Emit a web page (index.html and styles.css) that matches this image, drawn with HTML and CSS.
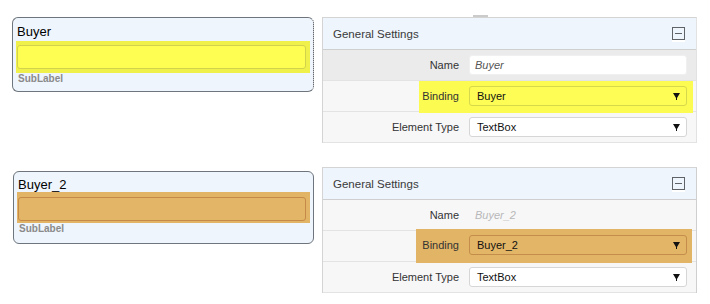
FILE: index.html
```html
<!DOCTYPE html>
<html lang="en">
<head>
  <meta charset="UTF-8" />
  <meta name="viewport" content="width=device-width, initial-scale=1.0" />
  <title>Binding highlight</title>
  <link rel="stylesheet" href="styles.css">
</head>
<body>
  <div class="board">
    <div class="pair">
      <div class="card card--selected">
        <div class="card-label">Buyer</div>
        <div class="mark mark--yellow"><div class="card-input"></div></div>
        <div class="sublabel">SubLabel</div>
      </div>

      <div class="panel">
        <span class="handle"></span>
        <div class="panel-head">
          <span>General Settings</span>
          <svg class="collapse" width="13" height="13" viewBox="0 0 13 13">
            <rect x="0.5" y="0.5" width="12" height="12" fill="none" stroke="#5f6368" />
            <line x1="3" y1="6.5" x2="10" y2="6.5" stroke="#5f6368" />
          </svg>
        </div>
        <div class="prop prop--focus">
          <label class="prop-label">Name</label>
          <div class="prop-value"><div class="field text-input">Buyer</div></div>
        </div>
        <div class="prop">
          <label class="prop-label hl hl--yellow">Binding</label>
          <div class="prop-value hl hl--yellow">
            <div class="field select">Buyer
              <svg width="7" height="7" viewBox="0 0 7 7"><path d="M0 0H7L4 5V7H3V5Z" fill="#111" /></svg>
            </div>
          </div>
        </div>
        <div class="prop">
          <label class="prop-label">Element Type</label>
          <div class="prop-value">
            <div class="field select">TextBox
              <svg width="7" height="7" viewBox="0 0 7 7"><path d="M0 0H7L4 5V7H3V5Z" fill="#111" /></svg>
            </div>
          </div>
        </div>
      </div>
    </div>

    <div class="pair">
      <div class="card card--alt">
        <div class="card-label">Buyer_2</div>
        <div class="mark mark--orange"><div class="card-input"></div></div>
        <div class="sublabel">SubLabel</div>
      </div>

      <div class="panel panel--alt">
        <div class="panel-head">
          <span>General Settings</span>
          <svg class="collapse" width="13" height="13" viewBox="0 0 13 13">
            <rect x="0.5" y="0.5" width="12" height="12" fill="none" stroke="#5f6368" />
            <line x1="3" y1="6.5" x2="10" y2="6.5" stroke="#5f6368" />
          </svg>
        </div>
        <div class="prop">
          <label class="prop-label">Name</label>
          <div class="prop-value"><div class="field text-input text-input--bare">Buyer_2</div></div>
        </div>
        <div class="prop">
          <label class="prop-label hl hl--orange">Binding</label>
          <div class="prop-value hl hl--orange">
            <div class="field select">Buyer_2
              <svg width="7" height="7" viewBox="0 0 7 7"><path d="M0 0H7L4 5V7H3V5Z" fill="#111" /></svg>
            </div>
          </div>
        </div>
        <div class="prop">
          <label class="prop-label">Element Type</label>
          <div class="prop-value">
            <div class="field select">TextBox
              <svg width="7" height="7" viewBox="0 0 7 7"><path d="M0 0H7L4 5V7H3V5Z" fill="#111" /></svg>
            </div>
          </div>
        </div>
      </div>
    </div>
  </div>
</body>
</html>
```

FILE: styles.css
```css
body {
  margin: 0;
  font-family: "Liberation Sans", Arial, sans-serif;
  background: #fff;
}
.board {
  padding: 17px 0 0 12px;
}
.pair {
  display: flex;
  align-items: flex-start;
  gap: 8px;
}
.pair + .pair {
  margin-top: 24px;
}

/* designer cards */
.card {
  width: 302px;
  height: 75px;
  box-sizing: border-box;
  border: 1px solid #6e757c;
  border-radius: 6px;
  background: #eff5fc;
  padding: 6px 3px 0 3px;
}
.card--selected {
  border-right: 1px dotted #3a3a3a;
}
.card--alt {
  width: 301px;
  height: 73px;
  margin: 4px 0 0 1px;
  padding-top: 5px;
}
.card-label {
  font-size: 13px;
  line-height: 15px;
  padding-left: 1px;
  margin-bottom: 2px;
  color: #000;
}
.card--alt .card-label {
  margin-bottom: 0;
}
.mark {
  padding: 4px 4px 4px 1px;
}
.card--alt .mark {
  padding: 5px 4px 2px 1px;
}
.card-input {
  height: 24px;
  box-sizing: border-box;
  border: 1px solid;
  border-radius: 3px;
}
.mark--yellow {
  background: #f0f04b;
}
.mark--yellow .card-input {
  background: #fdfd52;
  border-color: #d3d24c;
}
.mark--orange {
  background: #e2b466;
}
.mark--orange .card-input {
  background: #e3b567;
  border-color: #c68a48;
}
.sublabel {
  font-size: 10px;
  font-weight: bold;
  line-height: 12px;
  color: #8a8a8a;
  padding-left: 2px;
}

/* property panels */
.panel {
  position: relative;
  width: 375px;
  box-sizing: border-box;
  border: 1px solid #d4d4d4;
  border-bottom: none;
  border-right-color: #e2e2e2;
}
.panel--alt {
  border-right-color: #cfcfcf;
}
.handle {
  position: absolute;
  top: -3px;
  left: 150px;
  width: 15px;
  height: 2px;
  background: #cbcbcb;
}
.panel-head {
  height: 31px;
  background: #eef5fd;
  border-bottom: 1px solid #cfcfcf;
  display: flex;
  align-items: center;
  justify-content: space-between;
  padding: 0 11px 0 10px;
  font-size: 11.5px;
  color: #3a3a3a;
}
.collapse {
  display: block;
  box-shadow: 0 2px 0 #fff;
}
.prop {
  display: grid;
  grid-template-columns: 1fr 227px;
  height: 30px;
  border-bottom: 1px solid #e3e3e3;
  background: #f7f7f8;
  font-size: 11px;
}
.prop--focus {
  background: #ebebeb;
}
.prop-label {
  justify-self: end;
  padding: 5px 10px 0 3px;
  line-height: 20px;
  color: #333;
}
.prop-value {
  padding: 5px 9px 0 0;
}
.field {
  height: 20px;
  box-sizing: border-box;
  border: 1px solid #d6d6d6;
  border-radius: 3px;
  background: #fff;
  display: flex;
  align-items: center;
  justify-content: space-between;
  color: #111;
}
.select {
  padding: 0 6px 0 7px;
}
.select svg {
  display: block;
}
.text-input {
  padding: 0 5px;
  border-color: #f0f0f0;
  font-style: italic;
  color: #555;
}
.text-input--bare {
  background: transparent;
  border-color: transparent;
  color: #b8b8b8;
}

/* binding highlights */
.hl {
  position: relative;
  z-index: 1;
}
.hl--yellow {
  background: #fbfb52;
  margin-bottom: -2px;
}
.prop-value.hl--yellow {
  padding-right: 6px;
  margin-right: 3px;
}
.hl--yellow .select {
  background: #fdfd55;
  border-color: #d8d84c;
}
.hl--orange {
  background: #e2b466;
  margin: -2px 0 -2px;
  padding-top: 6px;
}
.prop-label.hl--orange {
  padding-left: 6px;
}
.prop-value.hl--orange {
  padding-right: 5px;
  margin-right: 4px;
}
.hl--orange .select {
  background: #e3b567;
  border-color: #c58d4b;
}
```
